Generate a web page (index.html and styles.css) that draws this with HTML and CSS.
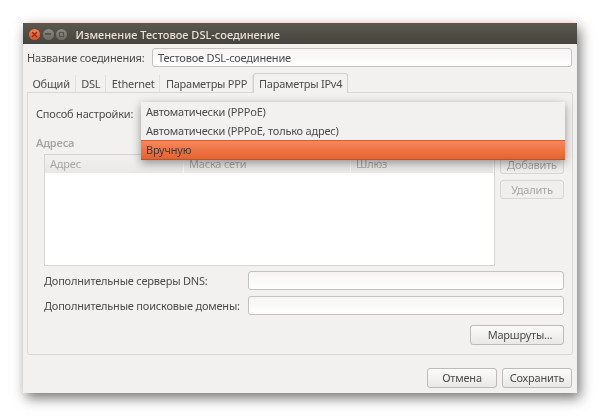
FILE: index.html
```html
<!DOCTYPE html>
<html>
<head>
	<title>Изменение Тестовое DSL-соединение</title>
	<meta charset="utf-8">
	<link rel="stylesheet" href="styles.css">
</head>
<body>
	<section class="window">
		<header class="titlebar">
			<span class="wbtn wbtn-close"><svg width="7" height="7" viewBox="0 0 7 7"><path d="M1 1l5 5M6 1l-5 5" stroke="#8a2a10" stroke-width="1.2"/></svg></span>
			<span class="wbtn wbtn-min"><i class="min-bar"></i></span>
			<span class="wbtn wbtn-max"><i class="max-box"></i></span>
			<span class="title">Изменение Тестовое DSL-соединение</span>
		</header>

		<div class="content">
			<div class="name-row">
				<label>Название соединения:</label>
				<div class="entry">Тестовое DSL-соединение</div>
			</div>

			<div class="tabs">
				<span class="tab">Общий</span>
				<span class="tab">DSL</span>
				<span class="tab">Ethernet</span>
				<span class="tab">Параметры PPP</span>
				<span class="tab active">Параметры IPv4</span>
			</div>

			<div class="notebook">
				<div class="method-row">Способ настройки:</div>

				<div class="addr-label">Адреса</div>
				<div class="addr-row">
					<div class="tree">
						<div class="tree-head">
							<span class="col-addr">Адрес</span>
							<span class="col-mask">Маска сети</span>
							<span class="col-gate">Шлюз</span>
						</div>
					</div>
					<div class="side-btns">
						<div class="btn disabled">Добавить</div>
						<div class="btn disabled">Удалить</div>
					</div>
				</div>

				<div class="field-row">
					<label>Дополнительные серверы DNS:</label>
					<div class="entry"></div>
				</div>
				<div class="field-row">
					<label>Дополнительные поисковые домены:</label>
					<div class="entry"></div>
				</div>

				<div class="routes-row">
					<div class="btn routes">Маршруты...</div>
				</div>
			</div>

			<div class="actions">
				<div class="btn action">Отмена</div>
				<div class="btn action">Сохранить</div>
			</div>
		</div>

		<div class="menu">
			<div class="menu-item">Автоматически (PPPoE)</div>
			<div class="menu-item">Автоматически (PPPoE, только адрес)</div>
			<div class="menu-item selected">Вручную</div>
		</div>
	</section>
</body>
</html>
```

FILE: styles.css
```css
html, body {
	height: 100%;
	margin: 0;
	padding: 0;
}

body {
	background-color: white;
	font-family: "Noto Sans", "Open Sans", sans-serif;
	font-size: 11px;
	letter-spacing: -0.2px;
	color: #4c4c4c;
	padding: 23px 0 0 23px;
	box-sizing: border-box;
	overflow: hidden;
}

.window {
	position: relative;
	width: 554px;
	height: 370px;
	background-color: #f2f1f0;
	box-shadow: 3px 5px 12px rgba(0,0,0, 0.55);
	filter: blur(0.45px);
}

.titlebar {
	display: flex;
	align-items: center;
	height: 21px;
	padding-left: 6px;
	background: linear-gradient(#5a574e, #45433d);
	border-top: 1px solid #7a4a38;
	box-sizing: border-box;
}

.wbtn {
	display: flex;
	align-items: center;
	justify-content: center;
	width: 11px;
	height: 11px;
	border-radius: 50%;
	margin-right: 2.5px;
}
.wbtn-close { background: linear-gradient(#f5855a, #dd4c20); }
.wbtn-min, .wbtn-max { background: linear-gradient(#8b8880, #6c6a63); }

.min-bar {
	display: block;
	width: 6px;
	height: 2px;
	background-color: #55534c;
}
.max-box {
	display: block;
	width: 3px;
	height: 3px;
	border: 1px solid #55534c;
}

.title {
	margin-left: 6px;
	color: #e6e2d9;
	font-weight: 500;
	letter-spacing: 0;
}

.content {
	padding: 4px 4px 0 4px;
}

.name-row {
	display: flex;
	align-items: center;
	height: 19px;
	margin-right: 1px;
}
.name-row label {
	width: 125px;
	flex: none;
}
.name-row .entry { flex: 1; }

.entry {
	height: 19px;
	padding-left: 5px;
	line-height: 17px;
	box-sizing: border-box;
	background: linear-gradient(#f6f5f4, #ffffff);
	border: 1px solid #c4c2be;
	border-radius: 3px;
}

.tabs {
	display: flex;
	align-items: flex-end;
	height: 19px;
	margin-top: 6px;
	letter-spacing: -0.25px;
}
.tab {
	height: 17px;
	line-height: 17px;
	padding: 0 5px 0 5.5px;
	border-right: 1px solid #e2e0dd;
}
.tab.active {
	height: 19px;
	line-height: 19px;
	padding: 0 5px;
	background-color: #f2f1f0;
	border: 1px solid #d3d1cd;
	border-bottom: none;
	border-radius: 3px 3px 0 0;
	position: relative;
	top: 1px;
}

.notebook {
	box-sizing: border-box;
	width: 546px;
	height: 263px;
	padding: 11px 8px 0 16px;
	border: 1px solid #dad8d5;
	border-radius: 0 3px 3px 3px;
}

.method-row {
	height: 20px;
	line-height: 20px;
	margin-left: -8px;
}

.addr-label {
	margin: 10px 0 0 -8px;
	height: 20px;
	line-height: 18px;
	font-weight: 600;
	color: #a9a7a3;
}

.addr-row {
	display: flex;
	gap: 5px;
	height: 112px;
}

.tree {
	width: 451px;
	height: 112px;
	box-sizing: border-box;
	background-color: white;
	border: 1px solid #d6d4d0;
}
.tree-head {
	display: flex;
	height: 18px;
	line-height: 18px;
	color: #a9a7a3;
	background: linear-gradient(#f2f1f0, #e9e8e6);
}
.tree-head span {
	padding-left: 5px;
	box-sizing: border-box;
	border-right: 1px solid #f8f8f7;
}
.col-addr { width: 139px; }
.col-mask { width: 167px; }
.col-gate { flex: 1; border-right: none; }

.side-btns {
	display: flex;
	flex-direction: column;
	gap: 6px;
	width: 64px;
	padding-top: 1px;
}

.btn {
	height: 20px;
	line-height: 18px;
	box-sizing: border-box;
	text-align: center;
	background: linear-gradient(#fbfbfa, #e9e8e6);
	border: 1px solid #bdbbb7;
	border-radius: 3px;
}
.btn.disabled {
	height: 19px;
	line-height: 17px;
	color: #a9a7a3;
	background: #f0efee;
	border-color: #d8d6d3;
}

.field-row {
	display: flex;
	align-items: center;
	height: 19px;
	margin-top: 6px;
	width: 520px;
}
.field-row label {
	width: 204px;
	flex: none;
}
.field-row .entry { flex: 1; }
.addr-row + .field-row { margin-top: 5px; }

.routes-row {
	display: flex;
	justify-content: flex-end;
	width: 520px;
	margin-top: 10px;
}
.btn.routes {
	width: 94px;
	padding-left: 6px;
}

.actions {
	display: flex;
	justify-content: flex-end;
	gap: 5px;
	margin-top: 13px;
	padding-right: 1px;
}
.btn.action { width: 70px; }

/* popup list of the combo box lies over the page */
.menu {
	position: absolute;
	left: 118px;
	top: 79px;
	width: 424px;
	height: 58px;
	background-color: #f2f1f0;
	box-shadow: 0 3px 9px rgba(0,0,0, 0.4);
}
.menu-item {
	height: 19px;
	line-height: 19px;
	padding-left: 5px;
}
.menu-item.selected {
	height: 20px;
	line-height: 18px;
	color: #3c3c3c;
	background: linear-gradient(#f8875a, #e4632f);
	border-top: 1px solid #c9633a;
	border-bottom: 1px solid #b9542a;
	box-sizing: border-box;
}
```
